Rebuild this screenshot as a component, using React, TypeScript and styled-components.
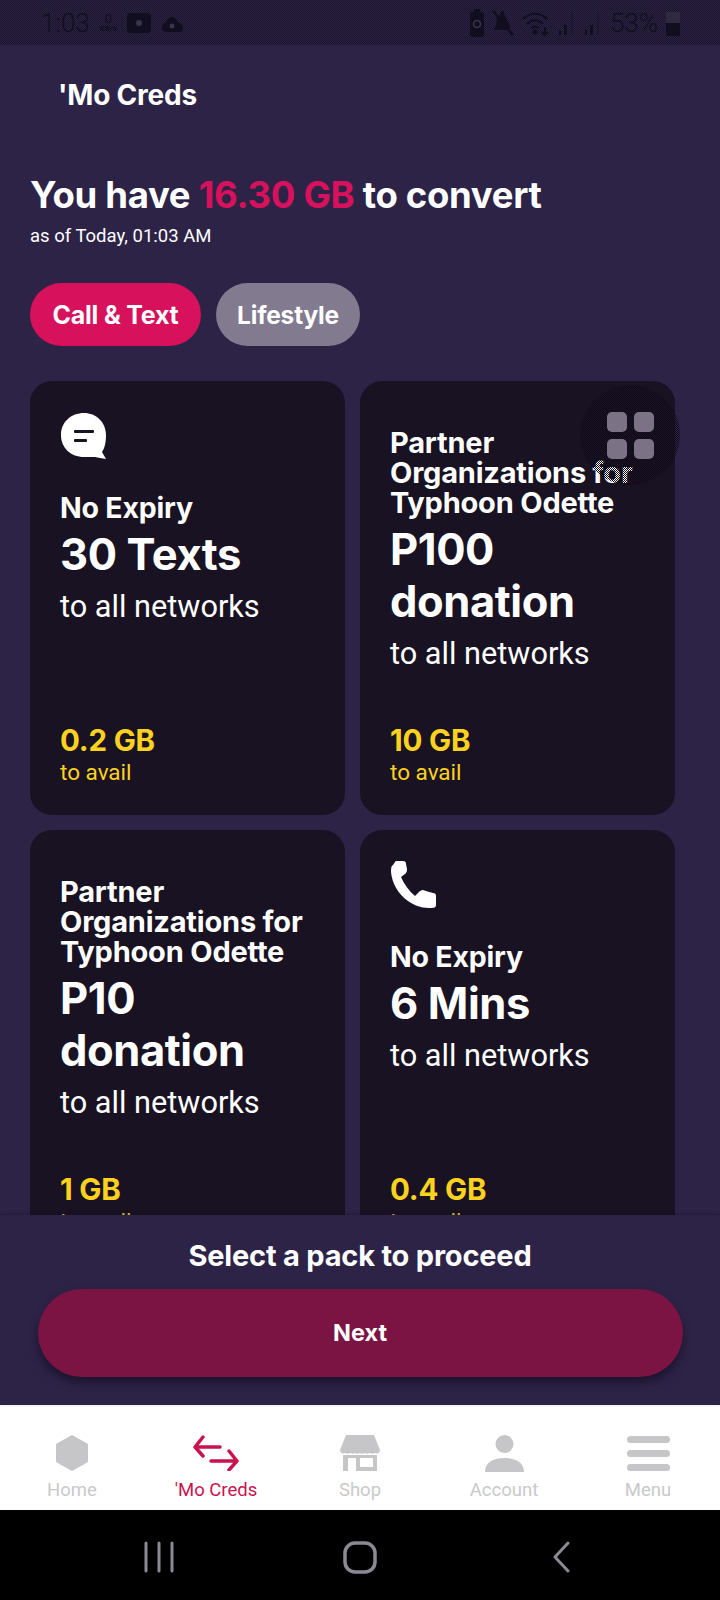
import React from "react";
import styled, { createGlobalStyle } from "styled-components";

const Global = createGlobalStyle`
  html, body { margin: 0; padding: 0; background: #000; }
  * { box-sizing: border-box; }
`;

const Phone = styled.div`
  width: 720px; height: 1600px; display: flex; flex-direction: column;
  background: #2d2347; overflow: hidden; font-family: Inter, "Liberation Sans", sans-serif; color: #fff;
`;

const StatusBar = styled.div`
  height: 45px; flex: none; display: flex; align-items: center; justify-content: space-between;
  padding: 0 40px 0 41px; color: #110e1f;
  background: repeating-conic-gradient(#2d2347 0 25%, #191429 0 50%) 0 0 / 2px 2px;
  font-family: Roboto, sans-serif;
`;
const StatusGroup = styled.div`display: flex; align-items: center; gap: ${(p: { $gap: number }) => p.$gap}px;`;
const StatusText = styled.span`font-size: 26px; font-weight: 300; line-height: 1;`;
const Kbs = styled.span`
  display: flex; flex-direction: column; align-items: center; font-size: 8px; font-weight: 700; line-height: 8px;
  & b { font-size: 13px; font-weight: 400; line-height: 13px; }
`;

const Main = styled.main`flex: 1; min-height: 0; overflow: hidden; position: relative; display: flex; flex-direction: column;`;
const PageName = styled.h1`margin: 31px 0 0 58px; font-size: 28px; line-height: 38px; font-weight: 700; letter-spacing: -0.2px;`;
const Title = styled.h2`margin: 60px 0 0 30px; font-size: 36.500px; line-height: 42px; font-weight: 700; letter-spacing: -0.3px;`;
const Accent = styled.span`color: #d7115c;`;
const AsOf = styled.p`margin: 9px 0 0 30px; font: 400 18.500px/22px Roboto, sans-serif;`;
const Tabs = styled.div`display: flex; gap: 15px; margin: 36px 0 0 30px;`;
const Tab = styled.button<{ $active?: boolean }>`
  height: 63px; width: ${(p) => (p.$active ? "171px" : "144px")}; padding: 0; border: 0; border-radius: 32px; color: #fff;
  font: 700 ${(p) => (p.$active ? "25px" : "24.500px")} Inter, sans-serif; letter-spacing: -0.2px;
  background: ${(p) => (p.$active ? "#d7115c" : "#827a8f")};
`;
const Grid = styled.div`display: grid; grid-template-columns: 315px 315px; grid-auto-rows: 434px; gap: 15px; margin: 35px 0 0 30px;`;
const Card = styled.article`
  position: relative; border-radius: 22px; background: #181222; padding: 31px 30px 0;
  display: flex; flex-direction: column;
`;
const IconSlot = styled.div`height: 48px; margin-bottom: 30px; display: flex; align-items: flex-start;`;
const Org = styled.div`font-size: 29px; line-height: 30px; font-weight: 700; margin: 16px -10px 3px 0; letter-spacing: -0.2px;`;
const Expiry = styled.div`font-size: 28.500px; line-height: 36px; font-weight: 700; letter-spacing: -0.2px;`;
const Amount = styled.div`font-size: 43.500px; line-height: 52px; font-weight: 700; margin-top: 2px; letter-spacing: -0.4px;`;
const Scope = styled.div`font: 400 30.700px/40px Roboto, sans-serif; margin-top: 7px;`;
const Price = styled.div`position: absolute; left: 30px; bottom: 59px; color: #fdd21f; font-size: 29.500px; line-height: 32px; font-weight: 700; letter-spacing: -0.2px;`;
const Avail = styled.div`position: absolute; left: 30px; bottom: 30px; color: #fdd21f; font: 400 22.500px/26px Roboto, sans-serif;`;

const FloatButton = styled.div`
  position: absolute; left: 580px; top: 340px; width: 100px; height: 100px; border-radius: 50%;
  background: repeating-conic-gradient(#100b19 0 25%, transparent 0 50%) 0 0 / 2px 2px;
  display: grid; grid-template-columns: 20px 20px; grid-auto-rows: 20px;
  gap: 7px; align-content: center; justify-content: center;
`;
const FloatCell = styled.span`border-radius: 5px; background: #7b7385;`;

const Footer = styled.footer`
  height: 190px; flex: none; background: #2d2347; display: flex; flex-direction: column; align-items: center;
  box-shadow: 0 -1px 3px rgba(18, 14, 30, 0.35); position: relative;
`;
const Hint = styled.div`font-size: 29px; line-height: 36px; font-weight: 700; margin-top: 23px; letter-spacing: -0.2px;`;
const Next = styled.button`
  width: 645px; height: 88px; margin-top: 15px; border: 0; border-radius: 44px; background: #7b1443; color: #fff;
  font: 700 23.500px Inter, sans-serif; padding-bottom: 2px; box-shadow: 0 6px 8px rgba(15, 10, 25, 0.55);
`;

const Nav = styled.nav`height: 105px; flex: none; background: #fff; display: grid; grid-template-columns: repeat(5, 144px);`;
const NavItem = styled.div<{ $active?: boolean }>`
  display: flex; flex-direction: column; align-items: center; padding-top: 30px;
  color: ${(p) => (p.$active ? "#c9134f" : "#c9c9cb")}; font: 400 18.500px/24px Roboto, sans-serif;
`;
const NavIcon = styled.div`height: 36px; margin-bottom: 7px; display: flex; align-items: center; justify-content: center;`;

const SystemBar = styled.div`height: 90px; flex: none; background: #000; display: grid; grid-template-columns: repeat(3, 201px); align-items: center; justify-content: center; padding-top: 4px;`;
const SysSlot = styled.div`display: flex; justify-content: center;`;

const ChatIcon = () => (
  <svg width="47" height="47" viewBox="0 0 47 47">
    <path fill="#fff" d="M24 1C11 1 1 10 1 23s10 22 23 22c4 0 8 0 11 0 3 1 7 1 11 2l-4-7c3-4 4-11 4-17C46 10 36 1 24 1z" />
    <rect x="14" y="18" width="20" height="3" rx="1" fill="#181222" />
    <rect x="14" y="27" width="13" height="3" rx="1" fill="#181222" />
  </svg>
);
const PhoneIcon = () => (
  <svg width="48" height="48" viewBox="0 0 48 48">
    <path fill="#fff" d="M3 4c-2 1-2 4-2 7 1 11 7 22 17 29 6 4 12 7 21 7 4 0 7 0 7-3v-9c0-2-1-3-3-3-4-1-7-2-10-3-2 0-3 1-4 2l-4 4C19 30 14 23 11 16l4-3c2-2 2-3 2-5l-1-5c0-2-1-3-3-3H6C5 0 4 3 3 4z" />
  </svg>
);

const C = "#c6c6c8";
const HomeIcon = () => <svg width="32" height="36" viewBox="0 0 32 36"><path fill={C} d="M16 0l16 9v18L16 36 0 27V9z" /></svg>;
const SwapIcon = () => (
  <svg width="46" height="36" viewBox="0 0 46 36" fill="none" stroke="#c9134f" strokeWidth="3.500" strokeLinecap="round" strokeLinejoin="round">
    <path d="M27 12H2M10 2L2 12l8 9M18 26h26M36 16l8 10-8 9" />
  </svg>
);
const ShopIcon = () => (
  <svg width="40" height="36" viewBox="0 0 40 36">
    <path fill={C} d="M6 0h28l6 15c0 3-3 4-5 3-2 1-4 1-5 0-2 1-4 1-5 0-2 1-4 1-5 0-2 1-4 1-5 0-1 1-3 1-5 0-1 1-3 1-5 0-2 1-5 0-5-3z" />
    <path fill={C} fillRule="evenodd" d="M3 20h34v16H3zM8 23v13h8V23zM20 23v9h13v-9z" />
  </svg>
);
const PersonIcon = () => (
  <svg width="39" height="37" viewBox="0 0 39 37">
    <circle cx="19.500" cy="9" r="9" fill={C} />
    <path fill={C} d="M0 37c0-9 7-14 19.500-14S39 28 39 37z" />
  </svg>
);
const MenuIcon = () => (
  <svg width="43" height="36" viewBox="0 0 43 36" fill={C}>
    <rect y="1" width="43" height="7" rx="3.500" /><rect y="15" width="43" height="7" rx="3.500" /><rect y="29" width="43" height="7" rx="3.500" />
  </svg>
);

const D = "#110e1f";
const PlayBox = () => <svg width="24" height="22" viewBox="0 0 24 22"><rect y="1" width="24" height="20" rx="4" fill={D} /><circle cx="12" cy="11" r="3" fill="#3a3450" /></svg>;
const Cloud = () => <svg width="22" height="22" viewBox="0 0 22 22"><path fill={D} d="M6 20C2 20 0 17 1 14c1-2 2-3 4-3 1-4 4-6 6-6 3 0 5 2 6 6 3 0 5 2 5 5s-2 4-4 4z" /><circle cx="11" cy="14" r="2.500" fill="#3a3450" /></svg>;
const Lock = () => <svg width="14" height="28" viewBox="0 0 14 28"><path fill={D} d="M4 0h6v3h2c1 0 2 1 2 2v20c0 2-1 3-3 3H3c-2 0-3-1-3-3V5c0-1 1-2 2-2h2z" /><circle cx="7" cy="15" r="3.500" fill="none" stroke="#3a3450" strokeWidth="1.500" /></svg>;
const Mute = () => <svg width="22" height="28" viewBox="0 0 22 28"><path fill={D} d="M10 2l2 0 0 3 6 12v4H2l2-5 1-7z" /><path stroke={D} strokeWidth="2.500" d="M1 2l20 24" /></svg>;
const Wifi = () => <svg width="28" height="28" viewBox="0 0 28 28" fill="none" stroke={D} strokeWidth="2"><path d="M1 10c7-7 17-7 24 0M5 15c5-5 11-5 16 0M9 19c3-2 5-2 8 0" /><circle cx="13" cy="23" r="1.500" fill={D} /><path d="M23 18v8M20 23l3 3 3-3" /></svg>;
const Signal = () => <svg width="18" height="26" viewBox="0 0 18 26" fill={D}><rect x="1" y="20" width="2" height="5" /><rect x="6" y="15" width="3" height="10" /><rect x="13" y="2" width="2" height="23" opacity=".35" /></svg>;
const Battery = () => <svg width="14" height="26" viewBox="0 0 14 26"><rect x="0" y="2" width="14" height="24" fill="#2f2a40" /><rect x="0" y="13" width="14" height="13" fill={D} /></svg>;

const packs = [
  { icon: <ChatIcon />, expiry: "No Expiry", amount: "30 Texts", price: "0.2 GB" },
  { org: true, amount: "P100 donation", price: "10 GB" },
  { org: true, amount: "P10 donation", price: "1 GB" },
  { icon: <PhoneIcon />, expiry: "No Expiry", amount: "6 Mins", price: "0.4 GB" },
];

const navItems = [
  { label: "Home", icon: <HomeIcon /> },
  { label: "'Mo Creds", icon: <SwapIcon />, active: true },
  { label: "Shop", icon: <ShopIcon /> },
  { label: "Account", icon: <PersonIcon /> },
  { label: "Menu", icon: <MenuIcon /> },
];

export default function App() {
  return (
    <Phone>
      <Global />
      <StatusBar>
        <StatusGroup $gap={10}>
          <StatusText>1:03</StatusText>
          <Kbs><b>0</b>KB/s</Kbs>
          <PlayBox />
          <Cloud />
        </StatusGroup>
        <StatusGroup $gap={8}>
          <Lock /><Mute /><Wifi /><Signal /><Signal />
          <StatusText>53%</StatusText>
          <Battery />
        </StatusGroup>
      </StatusBar>
      <Main>
        <PageName>'Mo Creds</PageName>
        <Title>You have <Accent>16.30 GB</Accent> to convert</Title>
        <AsOf>as of Today, 01:03 AM</AsOf>
        <Tabs>
          <Tab $active>Call &amp; Text</Tab>
          <Tab>Lifestyle</Tab>
        </Tabs>
        <Grid>
          {packs.map((p) => (
            <Card key={p.amount}>
              {p.icon && <IconSlot>{p.icon}</IconSlot>}
              {p.org ? <Org>Partner Organizations for Typhoon Odette</Org> : <Expiry>{p.expiry}</Expiry>}
              <Amount>{p.amount}</Amount>
              <Scope>to all networks</Scope>
              <Price>{p.price}</Price>
              <Avail>to avail</Avail>
            </Card>
          ))}
        </Grid>
        <FloatButton>
          <FloatCell /><FloatCell /><FloatCell /><FloatCell />
        </FloatButton>
      </Main>
      <Footer>
        <Hint>Select a pack to proceed</Hint>
        <Next>Next</Next>
      </Footer>
      <Nav>
        {navItems.map((n) => (
          <NavItem key={n.label} $active={n.active}>
            <NavIcon>{n.icon}</NavIcon>
            {n.label}
          </NavItem>
        ))}
      </Nav>
      <SystemBar>
        <SysSlot>
          <svg width="30" height="32" viewBox="0 0 30 32" stroke="#8a8a94" strokeWidth="3" strokeLinecap="round"><path d="M2 2v28M15 2v28M28 2v28" /></svg>
        </SysSlot>
        <SysSlot>
          <svg width="34" height="33" viewBox="0 0 34 33" fill="none" stroke="#8a8a94" strokeWidth="3.500"><rect x="2" y="2" width="30" height="29" rx="10" /></svg>
        </SysSlot>
        <SysSlot>
          <svg width="19" height="32" viewBox="0 0 19 32" fill="none" stroke="#8a8a94" strokeWidth="3" strokeLinecap="round" strokeLinejoin="round"><path d="M16 2L3 16l13 14" /></svg>
        </SysSlot>
      </SystemBar>
    </Phone>
  );
}
